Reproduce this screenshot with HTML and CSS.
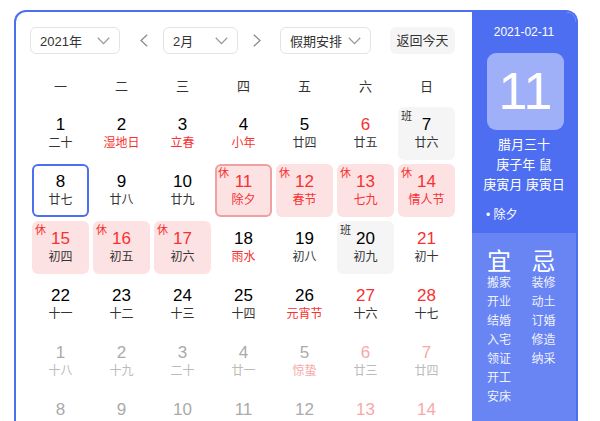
FILE: index.html
```html
<!DOCTYPE html>
<html lang="zh-CN">
<head>
<meta charset="utf-8">
<title>万年历</title>
<link rel="stylesheet" href="styles.css">
</head>
<body>
<div class="cal">
  <div class="main">
    <div class="toolbar">
      <div class="select sel-year"><span>2021年</span><svg class="chev" width="13" height="8" viewBox="0 0 13 8"><polyline points="0.8,0.8 6.5,6.6 12.2,0.8"/></svg></div>
      <span class="arrow prev"><svg width="8" height="13" viewBox="0 0 8 13"><polyline points="7.2,0.7 1,6.5 7.2,12.3"/></svg></span>
      <div class="select sel-month"><span>2月</span><svg class="chev" width="13" height="8" viewBox="0 0 13 8"><polyline points="0.8,0.8 6.5,6.6 12.2,0.8"/></svg></div>
      <span class="arrow next"><svg width="8" height="13" viewBox="0 0 8 13"><polyline points="0.8,0.7 7,6.5 0.8,12.3"/></svg></span>
      <div class="select sel-holiday"><span>假期安排</span><svg class="chev" width="13" height="8" viewBox="0 0 13 8"><polyline points="0.8,0.8 6.5,6.6 12.2,0.8"/></svg></div>
      <div class="today-btn">返回今天</div>
    </div>
    <div class="weekdays">
      <span>一</span><span>二</span><span>三</span><span>四</span><span>五</span><span>六</span><span>日</span>
    </div>
    <div class="grid">
      <div class="cell"><div class="num">1</div><div class="lunar">二十</div></div>
      <div class="cell"><div class="num">2</div><div class="lunar red">湿地日</div></div>
      <div class="cell"><div class="num">3</div><div class="lunar red">立春</div></div>
      <div class="cell"><div class="num">4</div><div class="lunar red">小年</div></div>
      <div class="cell"><div class="num">5</div><div class="lunar">廿四</div></div>
      <div class="cell"><div class="num red">6</div><div class="lunar">廿五</div></div>
      <div class="cell work"><span class="tag">班</span><div class="num">7</div><div class="lunar">廿六</div></div>

      <div class="cell today"><div class="num">8</div><div class="lunar">廿七</div></div>
      <div class="cell"><div class="num">9</div><div class="lunar">廿八</div></div>
      <div class="cell"><div class="num">10</div><div class="lunar">廿九</div></div>
      <div class="cell rest selected"><span class="tag">休</span><div class="num">11</div><div class="lunar red">除夕</div></div>
      <div class="cell rest"><span class="tag">休</span><div class="num">12</div><div class="lunar red">春节</div></div>
      <div class="cell rest"><span class="tag">休</span><div class="num">13</div><div class="lunar red">七九</div></div>
      <div class="cell rest"><span class="tag">休</span><div class="num">14</div><div class="lunar red">情人节</div></div>

      <div class="cell rest"><span class="tag">休</span><div class="num">15</div><div class="lunar">初四</div></div>
      <div class="cell rest"><span class="tag">休</span><div class="num">16</div><div class="lunar">初五</div></div>
      <div class="cell rest"><span class="tag">休</span><div class="num">17</div><div class="lunar">初六</div></div>
      <div class="cell"><div class="num">18</div><div class="lunar red">雨水</div></div>
      <div class="cell"><div class="num">19</div><div class="lunar">初八</div></div>
      <div class="cell work"><span class="tag">班</span><div class="num">20</div><div class="lunar">初九</div></div>
      <div class="cell"><div class="num red">21</div><div class="lunar">初十</div></div>

      <div class="cell"><div class="num">22</div><div class="lunar">十一</div></div>
      <div class="cell"><div class="num">23</div><div class="lunar">十二</div></div>
      <div class="cell"><div class="num">24</div><div class="lunar">十三</div></div>
      <div class="cell"><div class="num">25</div><div class="lunar">十四</div></div>
      <div class="cell"><div class="num">26</div><div class="lunar red">元宵节</div></div>
      <div class="cell"><div class="num red">27</div><div class="lunar">十六</div></div>
      <div class="cell"><div class="num red">28</div><div class="lunar">十七</div></div>

      <div class="cell other"><div class="num">1</div><div class="lunar">十八</div></div>
      <div class="cell other"><div class="num">2</div><div class="lunar">十九</div></div>
      <div class="cell other"><div class="num">3</div><div class="lunar">二十</div></div>
      <div class="cell other"><div class="num">4</div><div class="lunar">廿一</div></div>
      <div class="cell other"><div class="num">5</div><div class="lunar red">惊蛰</div></div>
      <div class="cell other"><div class="num red">6</div><div class="lunar">廿三</div></div>
      <div class="cell other"><div class="num red">7</div><div class="lunar">廿四</div></div>

      <div class="cell other"><div class="num">8</div></div>
      <div class="cell other"><div class="num">9</div></div>
      <div class="cell other"><div class="num">10</div></div>
      <div class="cell other"><div class="num">11</div></div>
      <div class="cell other"><div class="num">12</div></div>
      <div class="cell other"><div class="num red">13</div></div>
      <div class="cell other"><div class="num red">14</div></div>
    </div>
  </div>
  <div class="side">
    <div class="side-top">
      <div class="side-date">2021-02-11</div>
      <div class="side-day">11</div>
      <div class="side-lunar">
        <div>腊月三十</div>
        <div>庚子年 鼠</div>
        <div>庚寅月 庚寅日</div>
      </div>
      <div class="side-fest">• 除夕</div>
    </div>
    <div class="side-bottom">
      <div class="yj">
        <div class="yj-title">宜</div>
        <div>搬家</div><div>开业</div><div>结婚</div><div>入宅</div><div>领证</div><div>开工</div><div>安床</div>
      </div>
      <div class="yj">
        <div class="yj-title">忌</div>
        <div>装修</div><div>动土</div><div>订婚</div><div>修造</div><div>纳采</div>
      </div>
    </div>
  </div>
</div>
</body>
</html>
```

FILE: styles.css
```css
html, body {
  margin: 0;
  padding: 0;
  background: #fff;
  overflow: hidden;
}
body {
  font-family: "Liberation Sans", "Noto Sans CJK SC", Arial, sans-serif;
  color: #333;
}
.cal {
  margin: 10px 0 0 14px;
  width: 564px;
  height: 430px;
  box-sizing: border-box;
  border: 2px solid #4e6ef2;
  border-bottom: none;
  border-radius: 12px 12px 0 0;
  display: flex;
  overflow: hidden;
}
.main {
  width: 456px;
  padding: 15px 0 0 14px;
  box-sizing: border-box;
}
.toolbar {
  display: flex;
  align-items: center;
  height: 27px;
}
.select {
  height: 27px;
  box-sizing: border-box;
  border: 1px solid #e3e3e3;
  border-radius: 6px;
  display: flex;
  align-items: center;
  justify-content: space-between;
  padding: 0 9px 0 9px;
  font-size: 13px;
  color: #333;
}
.sel-year { width: 90px; }
.sel-month { width: 75px; }
.sel-holiday { width: 91px; }
.chev polyline, .arrow polyline {
  fill: none;
  stroke: #999;
  stroke-width: 1.3;
}
.arrow polyline { stroke: #8c8c8c; }
.arrow { display: flex; width: 8px; }
.prev { margin: 0 15px 0 20px; }
.next { margin: 0 19px 0 15px; }
.today-btn {
  margin-left: 19px;
  width: 65px;
  height: 27px;
  line-height: 27px;
  text-align: center;
  background: #f5f5f6;
  border-radius: 6px;
  font-size: 13px;
  color: #333;
}
.weekdays {
  margin: 18px 0 5px 2px;
  display: grid;
  grid-template-columns: repeat(7, 57px);
  column-gap: 4px;
  height: 30px;
  line-height: 30px;
  text-align: center;
  font-size: 13px;
  color: #333;
}
.grid {
  margin-left: 2px;
  display: grid;
  grid-template-columns: repeat(7, 57px);
  grid-auto-rows: 53px;
  gap: 4px;
}
.cell {
  position: relative;
  border-radius: 6px;
  text-align: center;
  padding-top: 8px;
  box-sizing: border-box;
}
.num {
  font-size: 17px;
  line-height: 20px;
  color: #000;
}
.lunar {
  font-size: 12px;
  line-height: 16px;
  color: #333;
}
.red { color: #f73131; }
.tag {
  position: absolute;
  left: 3px;
  top: 3px;
  font-size: 11px;
  line-height: 13px;
  color: #333;
}
.work { background: #f5f5f6; }
.rest { background: #fde2e3; }
.rest .tag, .rest .num { color: #f73131; }
.selected { box-shadow: inset 0 0 0 2px #f0a0a2; }
.today { box-shadow: inset 0 0 0 2px #4e6ef2; }
.other .num { color: #aaa; }
.other .lunar { color: #bbb; }
.other .red { color: #f7a8a8; }
.side {
  width: 104px;
  display: flex;
  flex-direction: column;
  background: #4e6ef2;
  color: #fff;
}
.side-top {
  padding: 12px 0 10px 0;
}
.side-date {
  text-align: center;
  font-size: 12px;
  line-height: 16px;
}
.side-day {
  margin: 13px 0 0 15px;
  width: 77px;
  height: 77px;
  border-radius: 9px;
  background: #9fb0f8;
  font-size: 52px;
  line-height: 77px;
  text-align: center;
}
.side-lunar {
  margin-top: 5px;
  text-align: center;
  font-size: 13px;
  line-height: 20px;
}
.side-fest {
  margin-top: 12px;
  padding-left: 14px;
  font-size: 12px;
  line-height: 16px;
}
.side-bottom {
  flex: 1;
  background: #6985f4;
  display: flex;
  padding: 16px 0 0 15px;
}
.yj {
  width: 54px;
  font-size: 12px;
  line-height: 19px;
  color: rgba(255, 255, 255, 0.92);
}
.yj-title {
  font-size: 24px;
  line-height: 25px;
  color: #fff;
}
```
